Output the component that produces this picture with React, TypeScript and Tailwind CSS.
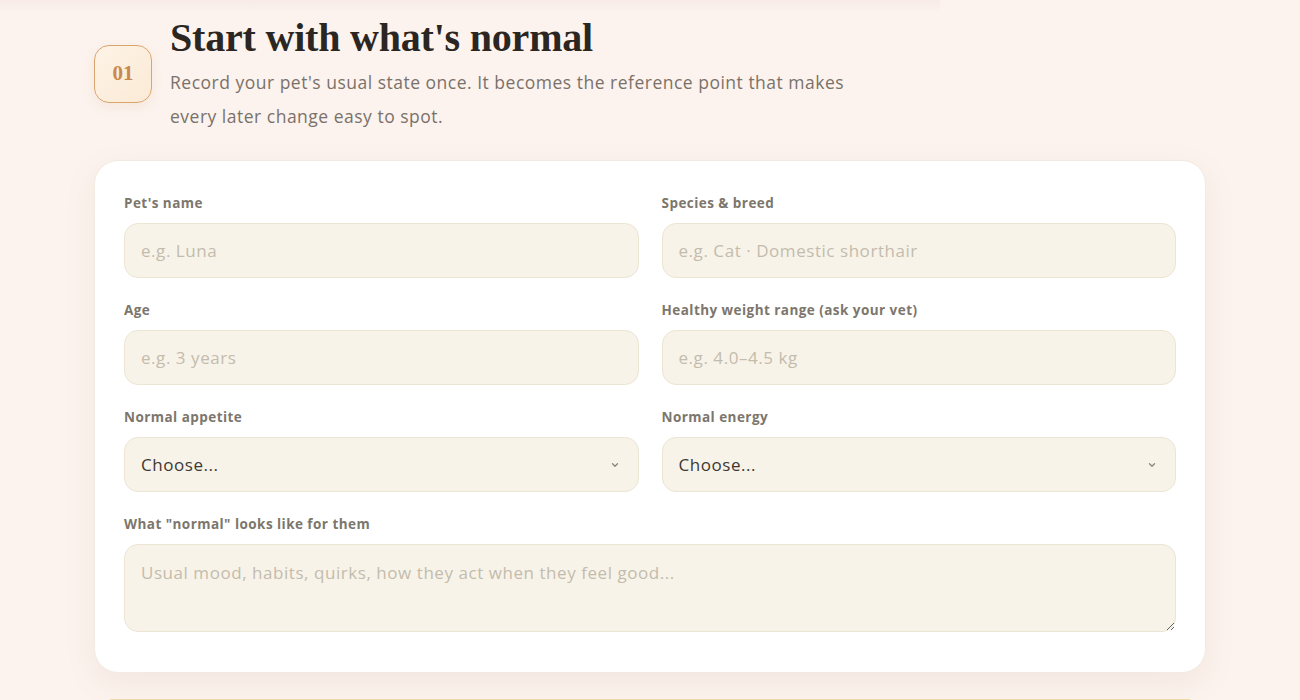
import React from "react";

const labelCls = "block text-[13.5px] font-bold tracking-[0.45px] text-[#7c766c] mb-[10px] leading-[19px]";
const inputCls =
  "w-full h-[55px] rounded-[14px] border border-[#ece5d4] bg-[#f8f3e9] px-[16px] text-[17px] tracking-[0.55px] text-[#3d3833] placeholder:text-[#c3bcad] outline-none";

function Field({ label, placeholder }: { label: string; placeholder: string }) {
  return (
    <div>
      <label className={labelCls}>{label}</label>
      <input className={inputCls} placeholder={placeholder} />
    </div>
  );
}

function SelectField({ label }: { label: string }) {
  return (
    <div>
      <label className={labelCls}>{label}</label>
      <div className="relative">
        <select className={inputCls + " appearance-none"} defaultValue="">
          <option value="">Choose...</option>
        </select>
        <svg
          className="absolute right-[19px] top-1/2 -translate-y-1/2 pointer-events-none"
          width="10"
          height="10"
          viewBox="0 0 10 10"
          fill="none"
          stroke="#8a847a"
          strokeWidth="1.3"
          strokeLinecap="round"
          strokeLinejoin="round"
        >
          <path d="M2.5 3.8 5 6.2 7.5 3.8" />
        </svg>
      </div>
    </div>
  );
}

export default function App() {
  return (
    <div
      className="min-h-[700px] w-full bg-[#fcf3ee] relative overflow-hidden"
      style={{ fontFamily: "'Open Sans', 'Noto Sans', sans-serif" }}
    >
      <div className="absolute left-0 top-0 h-[12px] w-[940px] bg-gradient-to-b from-[#f6ebe5] to-transparent" />
      <div className="w-[1112px] mx-auto pt-[14px]">
        <div className="flex items-center gap-[18px]">
          <div className="w-[58px] h-[58px] rounded-[15px] border border-[#d9a56c] bg-gradient-to-br from-[#fdf3e6] to-[#fbead6] flex items-center justify-center shadow-[0_4px_12px_rgba(200,150,100,0.12)]">
            <span
              className="text-[21px] font-bold text-[#c9894c]"
              style={{ fontFamily: "'Liberation Serif', 'DejaVu Serif', serif" }}
            >
              01
            </span>
          </div>
          <div>
            <h1
              className="text-[40px] leading-[48px] font-bold text-[#2b2622] tracking-[-0.2px]"
              style={{ fontFamily: "'Liberation Serif', 'DejaVu Serif', serif" }}
            >
              Start with what's normal
            </h1>
            <p className="mt-[3px] text-[17.5px] tracking-[0.5px] leading-[34px] text-[#7a716a] max-w-[760px]">
              Record your pet's usual state once. It becomes the reference point that makes
              <br />
              every later change easy to spot.
            </p>
          </div>
        </div>

        <div className="mt-[27px] rounded-[24px] bg-white border border-[#f1ebe1] shadow-[0_10px_30px_rgba(170,130,100,0.10)] px-[29px] pt-[33px] pb-[40px]">
          <div className="grid grid-cols-2 gap-x-[23px] gap-y-[23px]">
            <Field label="Pet's name" placeholder="e.g. Luna" />
            <Field label="Species & breed" placeholder="e.g. Cat · Domestic shorthair" />
            <Field label="Age" placeholder="e.g. 3 years" />
            <Field label="Healthy weight range (ask your vet)" placeholder="e.g. 4.0–4.5 kg" />
            <SelectField label="Normal appetite" />
            <SelectField label="Normal energy" />
            <div className="col-span-2">
              <label className={labelCls}>What "normal" looks like for them</label>
              <textarea
                className="w-full h-[88px] rounded-[14px] border border-[#ece5d4] bg-[#f8f3e9] px-[16px] py-[15px] text-[17px] tracking-[0.55px] text-[#3d3833] placeholder:text-[#c3bcad] outline-none block"
                placeholder="Usual mood, habits, quirks, how they act when they feel good..."
              />
            </div>
          </div>
        </div>
        <div className="mt-[26px] mx-[14px] h-[4px] rounded-t-[4px] border-t-2 border-[#ecd9a8] bg-[#fbf3e6]" />
      </div>
    </div>
  );
}
